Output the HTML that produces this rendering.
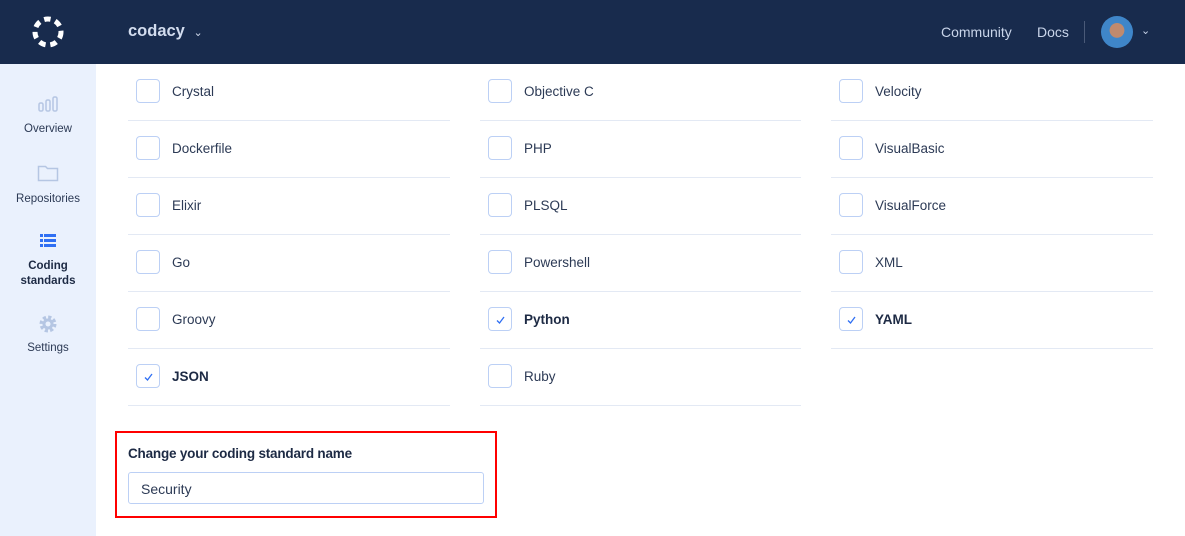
<!DOCTYPE html>
<html><head><style>
*{box-sizing:border-box;margin:0;padding:0}
body{width:1185px;height:536px;overflow:hidden;background:#fff;font-family:"Liberation Sans","DejaVu Sans",sans-serif;color:#1d2a44;position:relative}
.hdr{position:absolute;left:0;top:0;width:1185px;height:64px;background:#182b4d}
.side{position:absolute;left:0;top:64px;width:96px;height:472px;background:#eaf1fd}
.nav{position:absolute;left:0;width:96px;text-align:center;font-size:11.5px;color:#2c3a55}
.col{position:absolute;top:64px;width:322px}
.row{height:57px;border-bottom:1px solid #e3e9f4;position:relative}
.cb{position:absolute;left:8px;top:15px;width:24px;height:24px;border:1px solid #bcd0f5;border-radius:4px;background:#fff}
.lab{position:absolute;left:44px;top:20px;font-size:13.5px;color:#2c3a55}
.b{font-weight:bold;color:#1d2a44}
.cb svg{position:absolute;left:7px;top:8px}
</style></head><body>
<div class="hdr">
<svg style="position:absolute;left:31px;top:15px" width="34" height="34" viewBox="0 0 34 34"><circle cx="17" cy="17" r="13" fill="none" stroke="#fff" stroke-width="5" stroke-dasharray="6.5 4.9" stroke-linecap="butt"/></svg>
<div style="position:absolute;left:128px;top:22px;color:#d2dcee;font-weight:bold;font-size:16.5px">codacy <span style="font-weight:normal;font-size:11px;margin-left:4px">&#8964;</span></div>
<div style="position:absolute;left:941px;top:24px;color:#c9d5ea;font-size:14px">Community</div>
<div style="position:absolute;left:1037px;top:24px;color:#c9d5ea;font-size:14px">Docs</div>
<div style="position:absolute;left:1084px;top:21px;width:1px;height:22px;background:#4a5a78"></div>
<div style="position:absolute;left:1101px;top:16px;width:32px;height:32px;border-radius:50%;background:radial-gradient(circle at 50% 45%,#c08a6e 0 30%,#3f86c9 32%)"></div>
<div style="position:absolute;left:1141px;top:24px;color:#c9d5ea;font-size:11px">&#8964;</div>
</div>
<div class="side">
<div class="nav" style="top:32px"><svg width="20" height="16"><g fill="none" stroke="#b5c6e3" stroke-width="1.5"><rect x="1" y="7" width="4" height="8" rx="1.5"/><rect x="8" y="4" width="4" height="11" rx="1.5"/><rect x="15" y="1" width="4" height="14" rx="1.5"/></g></svg><div style="margin-top:8px">Overview</div></div>
<div class="nav" style="top:100px"><svg width="22" height="18"><path d="M1.5 2.5h7l2 2h10v12h-19z" fill="none" stroke="#b5c6e3" stroke-width="1.5"/></svg><div style="margin-top:8px">Repositories</div></div>
<div class="nav" style="top:170px"><svg width="16" height="14"><g fill="#2f6ff3"><rect x="0" y="0" width="3" height="3"/><rect x="4" y="0" width="12" height="3"/><rect x="0" y="5" width="3" height="3"/><rect x="4" y="5" width="12" height="3"/><rect x="0" y="10" width="3" height="3"/><rect x="4" y="10" width="12" height="3"/></g></svg><div style="margin-top:8px;font-weight:bold;color:#1d2a44;line-height:15px">Coding<br>standards</div></div>
<div class="nav" style="top:250px"><svg width="20" height="20" viewBox="0 0 20 20"><circle cx="10" cy="10" r="6.5" fill="none" stroke="#b5c6e3" stroke-width="4" stroke-dasharray="3 2.1"/><circle cx="10" cy="10" r="5.5" fill="#b5c6e3"/><circle cx="10" cy="10" r="2.5" fill="#eaf1fd"/></svg><div style="margin-top:5px">Settings</div></div>
</div>
<div class="col" style="left:128px">
<div class="row"><div class="cb"></div><div class="lab">Crystal</div></div>
<div class="row"><div class="cb"></div><div class="lab">Dockerfile</div></div>
<div class="row"><div class="cb"></div><div class="lab">Elixir</div></div>
<div class="row"><div class="cb"></div><div class="lab">Go</div></div>
<div class="row"><div class="cb"></div><div class="lab">Groovy</div></div>
<div class="row"><div class="cb"><svg width="9" height="8"><path d="M1 4.5l2.5 2.5 4.5-6" fill="none" stroke="#2f6ff3" stroke-width="1.3"/></svg></div><div class="lab b">JSON</div></div>
</div>
<div class="col" style="left:480px;width:321px">
<div class="row"><div class="cb"></div><div class="lab">Objective C</div></div>
<div class="row"><div class="cb"></div><div class="lab">PHP</div></div>
<div class="row"><div class="cb"></div><div class="lab">PLSQL</div></div>
<div class="row"><div class="cb"></div><div class="lab">Powershell</div></div>
<div class="row"><div class="cb"><svg width="9" height="8"><path d="M1 4.5l2.5 2.5 4.5-6" fill="none" stroke="#2f6ff3" stroke-width="1.3"/></svg></div><div class="lab b">Python</div></div>
<div class="row"><div class="cb"></div><div class="lab">Ruby</div></div>
</div>
<div class="col" style="left:831px">
<div class="row"><div class="cb"></div><div class="lab">Velocity</div></div>
<div class="row"><div class="cb"></div><div class="lab">VisualBasic</div></div>
<div class="row"><div class="cb"></div><div class="lab">VisualForce</div></div>
<div class="row"><div class="cb"></div><div class="lab">XML</div></div>
<div class="row"><div class="cb"><svg width="9" height="8"><path d="M1 4.5l2.5 2.5 4.5-6" fill="none" stroke="#2f6ff3" stroke-width="1.3"/></svg></div><div class="lab b">YAML</div></div>
</div>
<div style="position:absolute;left:115px;top:431px;width:382px;height:87px;border:2px solid #f00"></div>
<div style="position:absolute;left:128px;top:446px;font-size:13.5px;font-weight:bold;color:#1d2a44;letter-spacing:-0.2px">Change your coding standard name</div>
<div style="position:absolute;left:128px;top:472px;width:356px;height:32px;border:1px solid #bcd0f5;border-radius:3px;font-size:14px;padding:8px 12px;color:#2c3a55">Security</div>
</body></html>
